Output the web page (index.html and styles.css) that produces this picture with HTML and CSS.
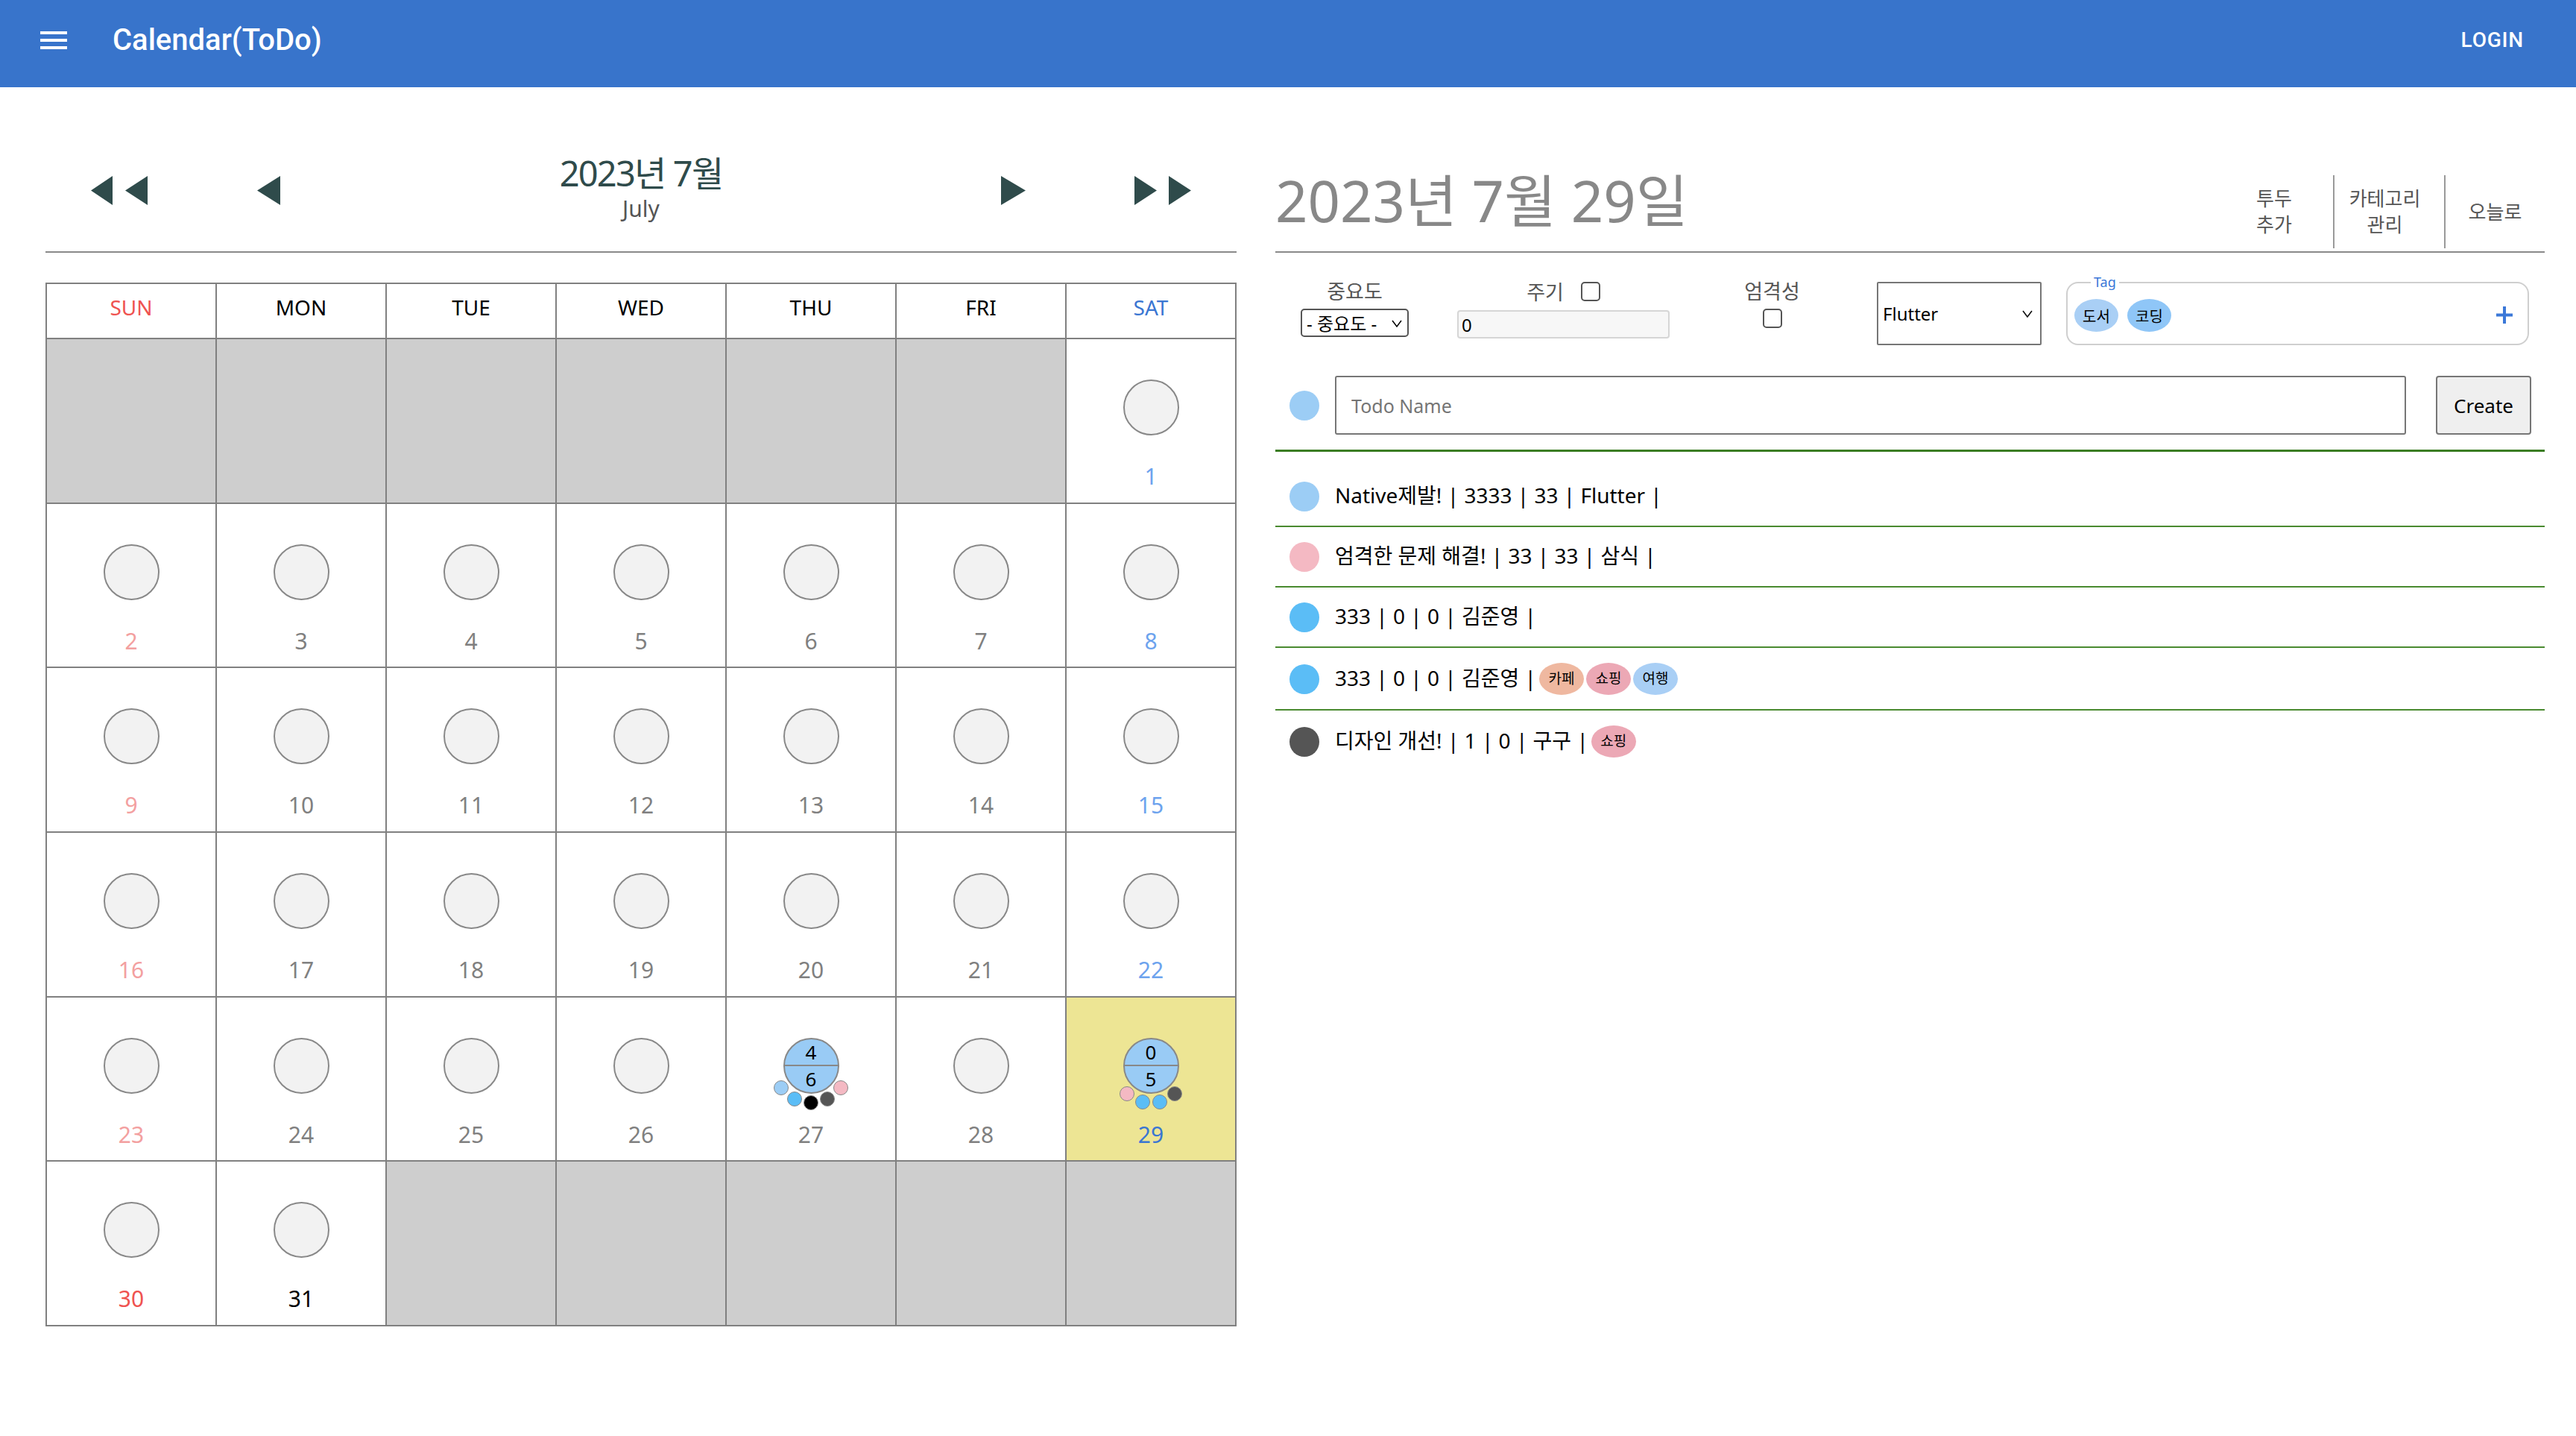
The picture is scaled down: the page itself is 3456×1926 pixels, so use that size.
FILE: index.html
```html
<!DOCTYPE html>
<html lang="ko">
<head>
<meta charset="utf-8">
<title>Calendar(ToDo)</title>
<link rel="stylesheet" href="styles.css">
</head>
<body>
<header class="appbar">
  <button class="menu-btn" aria-label="menu">
    <svg width="48" height="48" viewBox="0 0 24 24"><path d="M3 18h18v-2H3v2zm0-5h18v-2H3v2zm0-7v2h18V6H3z" fill="#fff"/></svg>
  </button>
  <div class="app-title">Calendar(ToDo)</div>
  <button class="login">LOGIN</button>
</header>

<main class="main">
  <section class="cal">
    <div class="cal-nav">
      <button class="arrow" aria-label="prev year"><svg width="76" height="39" viewBox="0 0 76 39"><path d="M0 19.5L29 0V39Z M46 19.5L76 0V39Z"/></svg></button>
      <button class="arrow" aria-label="prev month"><svg width="31" height="39" viewBox="0 0 31 39"><path d="M0 19.5L31 0V39Z"/></svg></button>
      <div class="month">
        <div class="month-ko">2023년 7월</div>
        <div class="month-en">July</div>
      </div>
      <button class="arrow" aria-label="next month"><svg width="33" height="39" viewBox="0 0 33 39"><path d="M33 19.5L0 0V39Z"/></svg></button>
      <button class="arrow" aria-label="next year"><svg width="76" height="39" viewBox="0 0 76 39"><path d="M30 19.5L0 0V39Z M76 19.5L46 0V39Z"/></svg></button>
    </div>

    <div class="cal-grid">
      <div class="dow sun">SUN</div>
      <div class="dow">MON</div>
      <div class="dow">TUE</div>
      <div class="dow">WED</div>
      <div class="dow">THU</div>
      <div class="dow">FRI</div>
      <div class="dow sat">SAT</div>

      <div class="cell empty"></div>
      <div class="cell empty"></div>
      <div class="cell empty"></div>
      <div class="cell empty"></div>
      <div class="cell empty"></div>
      <div class="cell empty"></div>
      <div class="cell"><div class="circle"></div><div class="num sat-past">1</div></div>

      <div class="cell"><div class="circle"></div><div class="num sun-past">2</div></div>
      <div class="cell"><div class="circle"></div><div class="num past">3</div></div>
      <div class="cell"><div class="circle"></div><div class="num past">4</div></div>
      <div class="cell"><div class="circle"></div><div class="num past">5</div></div>
      <div class="cell"><div class="circle"></div><div class="num past">6</div></div>
      <div class="cell"><div class="circle"></div><div class="num past">7</div></div>
      <div class="cell"><div class="circle"></div><div class="num sat-past">8</div></div>

      <div class="cell"><div class="circle"></div><div class="num sun-past">9</div></div>
      <div class="cell"><div class="circle"></div><div class="num past">10</div></div>
      <div class="cell"><div class="circle"></div><div class="num past">11</div></div>
      <div class="cell"><div class="circle"></div><div class="num past">12</div></div>
      <div class="cell"><div class="circle"></div><div class="num past">13</div></div>
      <div class="cell"><div class="circle"></div><div class="num past">14</div></div>
      <div class="cell"><div class="circle"></div><div class="num sat-past">15</div></div>

      <div class="cell"><div class="circle"></div><div class="num sun-past">16</div></div>
      <div class="cell"><div class="circle"></div><div class="num past">17</div></div>
      <div class="cell"><div class="circle"></div><div class="num past">18</div></div>
      <div class="cell"><div class="circle"></div><div class="num past">19</div></div>
      <div class="cell"><div class="circle"></div><div class="num past">20</div></div>
      <div class="cell"><div class="circle"></div><div class="num past">21</div></div>
      <div class="cell"><div class="circle"></div><div class="num sat-past">22</div></div>

      <div class="cell"><div class="circle"></div><div class="num sun-past">23</div></div>
      <div class="cell"><div class="circle"></div><div class="num past">24</div></div>
      <div class="cell"><div class="circle"></div><div class="num past">25</div></div>
      <div class="cell"><div class="circle"></div><div class="num past">26</div></div>
      <div class="cell">
        <div class="circle has">
          <span class="half top">4</span><span class="half">6</span>
          <i class="dot c-light" style="left:-14.5px;top:55.5px"></i>
          <i class="dot c-blue" style="left:3.2px;top:70.2px"></i>
          <i class="dot c-black" style="left:25.5px;top:75.5px"></i>
          <i class="dot c-dark" style="left:47.8px;top:70.2px"></i>
          <i class="dot c-pink" style="left:65.5px;top:55.5px"></i>
        </div>
        <div class="num past">27</div>
      </div>
      <div class="cell"><div class="circle"></div><div class="num past">28</div></div>
      <div class="cell today">
        <div class="circle has">
          <span class="half top">0</span><span class="half">5</span>
          <i class="dot c-pink" style="left:-6.6px;top:63.8px"></i>
          <i class="dot c-blue" style="left:14px;top:74.2px"></i>
          <i class="dot c-blue" style="left:37px;top:74.2px"></i>
          <i class="dot c-dark" style="left:57.6px;top:63.8px"></i>
        </div>
        <div class="num sat">29</div>
      </div>

      <div class="cell"><div class="circle"></div><div class="num sun">30</div></div>
      <div class="cell"><div class="circle"></div><div class="num">31</div></div>
      <div class="cell empty"></div>
      <div class="cell empty"></div>
      <div class="cell empty"></div>
      <div class="cell empty"></div>
      <div class="cell empty"></div>
    </div>
  </section>

  <section class="todo">
    <div class="todo-head">
      <h1 class="todo-date">2023년 7월 29일</h1>
      <div class="head-btns">
        <button class="hbtn b1">투두 추가</button>
        <button class="hbtn b2">카테고리 관리</button>
        <button class="hbtn b3">오늘로</button>
      </div>
    </div>

    <div class="opts">
      <div class="opt opt1">
        <div class="opt-label">중요도</div>
        <div class="sel-wrap">
          <select class="sel"><option>- 중요도 -</option></select>
          <svg class="chev chev-sm" width="14" height="10" viewBox="0 0 14 10"><path d="M1 1L7 9L13 1" fill="none" stroke="#000" stroke-width="1.5"/></svg>
        </div>
      </div>
      <div class="opt opt2">
        <div class="opt-label">주기 <input class="chk" type="checkbox"></div>
        <input class="num-input" type="text" value="0">
      </div>
      <div class="opt opt3">
        <div class="opt-label">엄격성</div>
        <input class="chk chk-below" type="checkbox">
      </div>
      <div class="cat-wrap">
        <select class="cat"><option>Flutter</option></select>
        <svg class="chev chev-cat" width="14" height="10" viewBox="0 0 14 10"><path d="M1 1L7 9L13 1" fill="none" stroke="#000" stroke-width="1.5"/></svg>
      </div>
      <div class="tagbox">
        <span class="tag-legend">Tag</span>
        <span class="chip chip-book">도서</span>
        <span class="chip chip-code">코딩</span>
        <svg class="plus" width="22" height="23" viewBox="0 0 22 23"><path d="M11 0V23M0 11.5H22" stroke="#3b78d8" stroke-width="4"/></svg>
      </div>
    </div>

    <div class="new-todo">
      <span class="big-dot c-light"></span>
      <input class="name-input" type="text" placeholder="Todo Name">
      <button class="create">Create</button>
    </div>

    <ul class="todo-list">
      <li class="todo-item"><span class="big-dot c-light"></span><span class="item-text">Native제발! | 3333 | 33 | Flutter |</span></li>
      <li class="todo-item"><span class="big-dot c-pink"></span><span class="item-text">엄격한 문제 해결! | 33 | 33 | 삼식 |</span></li>
      <li class="todo-item"><span class="big-dot c-blue"></span><span class="item-text">333 | 0 | 0 | 김준영 |</span></li>
      <li class="todo-item"><span class="big-dot c-blue"></span><span class="item-text">333 | 0 | 0 | 김준영 |</span><span class="rchip first chip-cafe">카페</span><span class="rchip chip-shop">쇼핑</span><span class="rchip chip-trip">여행</span></li>
      <li class="todo-item"><span class="big-dot c-dark"></span><span class="item-text">디자인 개선! | 1 | 0 | 구구 |</span><span class="rchip first chip-shop">쇼핑</span></li>
    </ul>
  </section>
</main>
</body>
</html>
```

FILE: styles.css
```css
* { box-sizing: border-box; }

body {
  margin: 0;
  background: #fff;
  color: #000;
  font-family: "Noto Sans", "Noto Sans CJK KR", sans-serif;
}

button, input, select {
  font-family: "Noto Sans", "Noto Sans CJK KR", sans-serif;
}

/* ---------- app bar ---------- */
.appbar {
  height: 117px;
  padding: 0 48px 9px 48px;
  background: #3874cb;
  display: flex;
  align-items: center;
  color: #fff;
}
.menu-btn {
  width: 48px;
  height: 48px;
  padding: 0;
  border: 0;
  background: none;
  display: flex;
  margin-right: 55px;
}
.app-title {
  font-family: Roboto, "Noto Sans", sans-serif;
  font-size: 40px;
  font-weight: 500;
  line-height: 48px;
}
.login {
  margin-left: auto;
  margin-right: 22px;
  padding: 0;
  border: 0;
  background: none;
  color: #fff;
  font-family: Roboto, "Noto Sans", sans-serif;
  font-size: 28px;
  font-weight: 500;
  line-height: 36px;
  letter-spacing: 0.8px;
}

/* ---------- layout ---------- */
.main {
  display: flex;
  gap: 52px;
  padding-left: 61px;
}
.cal { width: 1598px; flex: none; }
.todo { width: 1703px; flex: none; }

/* ---------- calendar nav ---------- */
.cal-nav {
  height: 222px;
  padding-top: 56px;
  border-bottom: 2px solid #8a8a8a;
  display: grid;
  grid-template-columns: 198px 203px 1fr 203px 198px;
  align-items: center;
  justify-items: center;
}
.arrow {
  padding: 0;
  border: 0;
  background: none;
  display: flex;
  fill: #2f4b4b;
}
.month {
  align-self: start;
  margin-top: 37px;
  text-align: center;
}
.month-ko {
  font-size: 47px;
  letter-spacing: -1.8px;
  line-height: 44px;
  color: #2f4b4b;
}
.month-en {
  font-size: 30px;
  line-height: 52px;
  color: #555;
}

/* ---------- calendar grid ---------- */
.cal-grid {
  margin-top: 40px;
  display: grid;
  grid-template-columns: repeat(7, 226px);
  grid-template-rows: 72px repeat(6, 218.67px);
  gap: 2px;
  padding: 2px;
  background: #808080;
}
.dow {
  background: #fff;
  text-align: center;
  font-size: 28px;
  line-height: 62px;
}
.dow.sun { color: #ef5350; }
.dow.sat { color: #3a76d2; }

.cell {
  background: #fff;
  display: flex;
  flex-direction: column;
  align-items: center;
  padding-top: 54px;
}
.cell.empty { background: #cecece; }
.cell.today { background: #ede594; }

.circle {
  position: relative;
  width: 75px;
  height: 75px;
  border: 2px solid #888;
  border-radius: 50%;
  background: #f2f2f2;
}
.circle.has {
  background: #99cbf5;
  display: flex;
  flex-direction: column;
}
.half {
  display: block;
  height: 34.5px;
  line-height: 34.5px;
  text-align: center;
  font-size: 26px;
  color: #000;
}
.half.top { border-bottom: 2px solid #888; height: 36.5px; }

.dot {
  position: absolute;
  width: 20px;
  height: 20px;
  border: 1px solid #888;
  border-radius: 50%;
}

.num {
  margin-top: 35px;
  font-size: 30px;
  line-height: 40px;
  color: #000;
}
.num.past { color: #808080; }
.num.sun-past { color: #f3a0a0; }
.num.sat-past { color: #6da3ee; }
.num.sun { color: #ef5350; }
.num.sat { color: #3a76d2; }

/* colours of todo markers */
.c-light { background: #9ccdf5; }
.c-blue { background: #5bbdf6; }
.c-black { background: #000; }
.c-dark { background: #555; }
.c-pink { background: #f4b9c3; }

/* ---------- todo head ---------- */
.todo-head {
  height: 222px;
  padding: 118px 0 4px 0;
  border-bottom: 2px solid #8a8a8a;
  display: flex;
}
.todo-date {
  margin: 0;
  align-self: flex-start;
  font-size: 76px;
  font-weight: 400;
  line-height: 67px;
  color: #888;
}
.head-btns {
  margin-left: auto;
  display: flex;
}
.hbtn {
  background: none;
  border: 0;
  padding: 0;
  font-size: 26px;
  line-height: 35px;
  color: #555;
  text-align: center;
}
.hbtn.b1 { width: 158px; padding: 0 40px; }
.hbtn.b2 { width: 149px; border-left: 2px solid #9a9a9a; padding: 0 22px 0 10px; }
.hbtn.b3 { width: 135px; border-left: 2px solid #9a9a9a; }

/* ---------- options row ---------- */
.opts {
  display: flex;
  align-items: flex-start;
  margin-top: 39px;
  padding-left: 34px;
}
.opt {
  display: flex;
  flex-direction: column;
  align-items: center;
}
.opt-label {
  display: flex;
  align-items: center;
  gap: 23px;
  font-size: 27px;
  line-height: 25px;
  color: #555;
}
.opt1 { width: 145px; }
.opt2 { width: 285px; margin-left: 65px; }
.opt3 { width: 83px; margin-left: 96px; }

.sel-wrap { position: relative; margin-top: 11px; }
.sel {
  appearance: none;
  -webkit-appearance: none;
  display: block;
  width: 145px;
  height: 38px;
  margin: 0;
  border: 2px solid #555;
  border-radius: 5px;
  background: #fff;
  color: #000;
  font-size: 24px;
  padding: 0 0 0 6px;
}
.chev { position: absolute; pointer-events: none; }
.chev-sm { left: 122px; top: 15px; }

.chk {
  appearance: none;
  -webkit-appearance: none;
  display: block;
  width: 26px;
  height: 26px;
  margin: 0;
  border: 2px solid #555;
  border-radius: 5px;
  background: #fff;
}
.chk-below { margin-top: 11px; }

.num-input {
  display: block;
  margin-top: 12px;
  width: 285px;
  height: 38px;
  border: 2px solid #d6d6d6;
  border-radius: 4px;
  background: #f7f7f7;
  font-size: 24px;
  padding: 0 4px;
  color: #000;
}

.cat-wrap { position: relative; margin-left: 99px; }
.cat {
  appearance: none;
  -webkit-appearance: none;
  display: block;
  width: 221px;
  height: 85px;
  margin: 0;
  border: 2px solid #767676;
  border-radius: 2px;
  background: #fff;
  color: #000;
  font-size: 24px;
  padding: 0 0 0 6px;
}
.chev-cat { left: 195px; top: 38px; }

.tagbox {
  position: relative;
  margin-left: 33px;
  width: 621px;
  height: 85px;
  border: 2px solid #cfcfcf;
  border-radius: 16px;
  display: flex;
  align-items: flex-start;
  gap: 12px;
  padding: 21px 20px 0 9px;
}
.tag-legend {
  position: absolute;
  left: 31px;
  top: -14px;
  padding: 0 4px;
  background: #fff;
  font-size: 18px;
  line-height: 24px;
  color: #3b78d8;
}
.chip {
  width: 59px;
  height: 44px;
  border-radius: 50%;
  display: flex;
  align-items: center;
  justify-content: center;
  font-size: 20px;
  color: #000;
}
.chip-book { background: #a9cff5; }
.chip-code { background: #8fc6f7; }
.plus { margin-left: auto; margin-top: 10px; }

/* ---------- new todo ---------- */
.new-todo {
  display: flex;
  align-items: center;
  margin-top: 41px;
  padding: 0 18px 20px 19px;
  border-bottom: 3px solid #3b7d23;
}
.big-dot {
  flex: none;
  width: 40px;
  height: 40px;
  border-radius: 50%;
}
.name-input {
  flex: 1;
  min-width: 0;
  margin-left: 21px;
  height: 79px;
  border: 2px solid #767676;
  border-radius: 3px;
  font-size: 25px;
  padding: 0 20px;
  color: #000;
}
.name-input::placeholder { color: #757575; }
.create {
  margin-left: 40px;
  width: 128px;
  height: 79px;
  border: 2px solid #767676;
  border-radius: 4px;
  background: #efefef;
  font-size: 26px;
  color: #000;
  padding: 0;
}

/* ---------- todo list ---------- */
.todo-list {
  list-style: none;
  margin: 0;
  padding: 20px 0 0 0;
}
.todo-item {
  display: flex;
  align-items: center;
  padding: 20px 0 19px 19px;
  border-bottom: 2px solid #4a8a30;
  font-size: 28px;
  line-height: 40px;
}
.todo-item:last-child { border-bottom: 0; }
.item-text {
  margin-left: 21px;
  line-height: 36px;
  padding-bottom: 4px;
}
.rchip {
  width: 60px;
  height: 43px;
  border-radius: 50%;
  font-size: 19px;
  line-height: 43px;
  text-align: center;
  margin-left: 3px;
}
.rchip.first { margin-left: 4px; }
.chip-cafe { background: #efb8a0; }
.chip-shop { background: #eca8b5; }
.chip-trip { background: #a9cff5; }
```
